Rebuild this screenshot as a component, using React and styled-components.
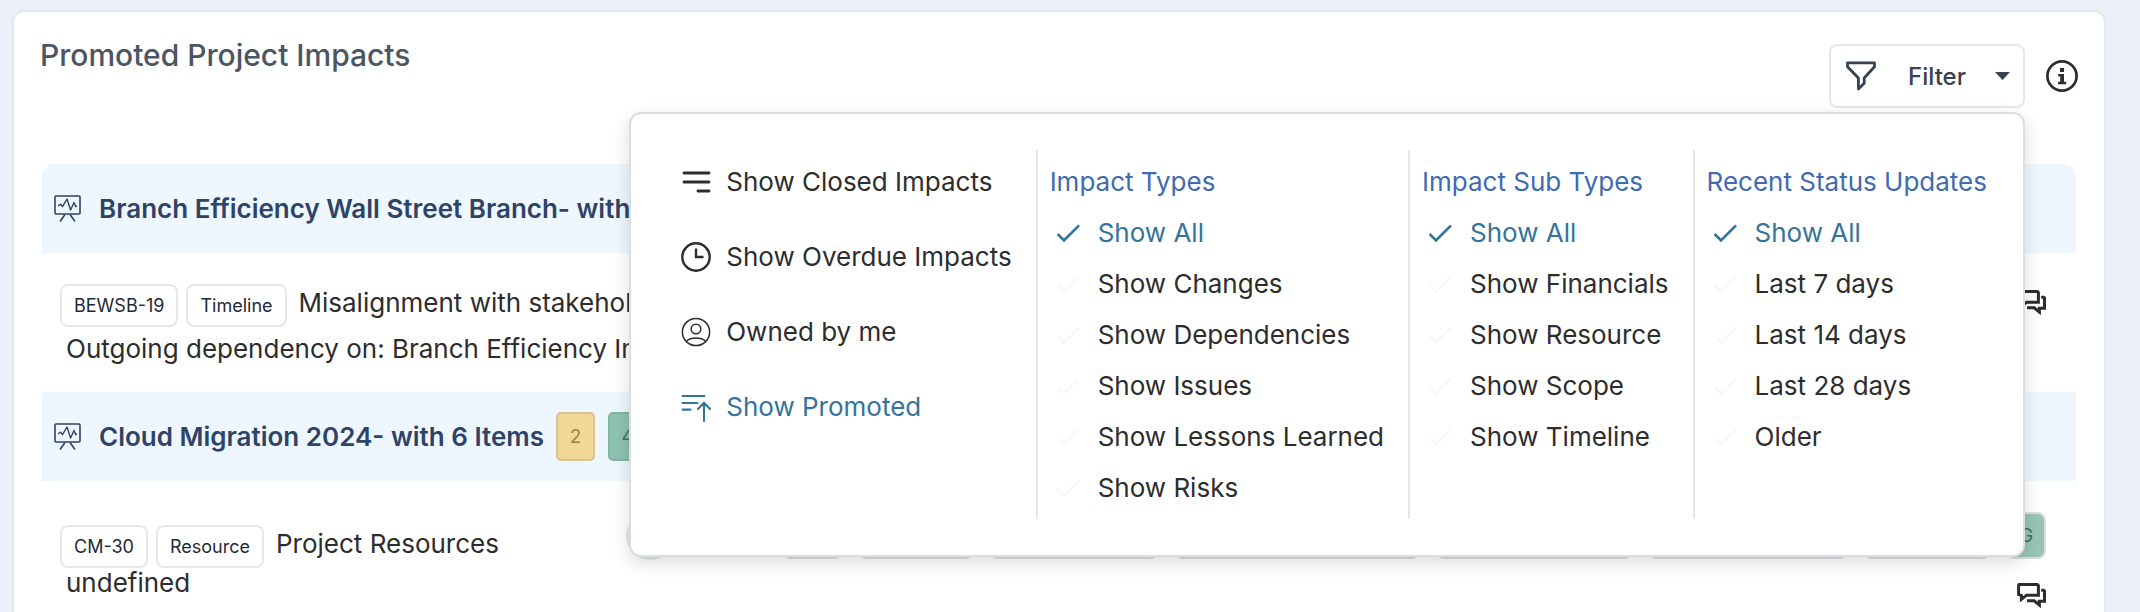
import React from 'react';
import styled, { createGlobalStyle } from 'styled-components';

const COLOR = {
  page: '#eaeff8',
  white: '#ffffff',
  line: '#e5e7eb',
  text: '#2d2d2d',
  title: '#4b5563',
  button: '#374151',
  navy: '#2f4366',
  heading: '#3f6bb0',
  active: '#34749c',
  faint: '#f7faf9',
  group: '#eef7ff',
};

const STATUS = {
  amber: { background: '#f1d798', border: '#d9c294', color: '#a08138' },
  green: { background: '#8fc1b1', border: '#84b3a4', color: '#3f7463' },
};

const GlobalStyle = createGlobalStyle`
  * {
    box-sizing: border-box;
  }

  body {
    margin: 0;
    background: ${COLOR.page};
    color: ${COLOR.text};
    font-family: Inter, 'Liberation Sans', sans-serif;
    font-size: 26px;
  }

  button {
    font: inherit;
    color: inherit;
    cursor: pointer;
  }
`;

const Page = styled.main`
  display: flex;
  flex-direction: column;
  min-height: 100vh;
  padding: 10px 34px 0 12px;
`;

const Card = styled.section`
  flex: 1;
  background: ${COLOR.white};
  border: 2px solid ${COLOR.line};
  border-bottom: 0;
  border-radius: 12px 12px 0 0;
`;

const Header = styled.header`
  display: flex;
  justify-content: space-between;
  align-items: flex-start;
  padding: 26px 26px 0;
`;

const Title = styled.h1`
  margin: 0;
  color: ${COLOR.title};
  font-size: 30px;
  font-weight: 500;
  line-height: 34px;
`;

const Actions = styled.div`
  display: flex;
  align-items: center;
  gap: 21px;
  padding-top: 6px;
`;

const Dropdown = styled.div`
  position: relative;
`;

const FilterButton = styled.button`
  display: flex;
  align-items: center;
  height: 64px;
  padding: 0 13px 0 15px;
  background: ${COLOR.white};
  border: 2px solid ${COLOR.line};
  border-radius: 8px;
  color: ${COLOR.button};
  font-size: 24px;
  font-weight: 500;
  gap: 29px;
`;

const FilterLabel = styled.span`
  padding-left: 3px;
`;

const IconButton = styled.button`
  display: flex;
  padding: 0;
  background: none;
  border: 0;
`;

const Panel = styled.div`
  position: absolute;
  top: calc(100% + 4px);
  right: 0;
  z-index: 10;
  display: flex;
  padding: 36px 36px 36px 50px;
  background: ${COLOR.white};
  border: 2px solid #dcdddf;
  border-radius: 12px;
  box-shadow: 0 6px 18px rgba(0, 0, 0, 0.14);
  white-space: nowrap;
`;

const QuickFilters = styled.div`
  display: flex;
  flex-direction: column;
  gap: 24px;
  padding: 6px 24px 6px 0;
`;

const FilterColumn = styled.div`
  padding: 6px 24px 6px 12px;
  border-left: 2px solid ${COLOR.line};

  &:last-child {
    padding-right: 0;
  }
`;

const ColumnHeading = styled.h2`
  margin: 0;
  color: ${COLOR.heading};
  font-size: 26px;
  font-weight: 400;
  line-height: 51px;
`;

const MenuItem = styled.button`
  display: flex;
  align-items: center;
  height: 51px;
  padding: 0;
  background: none;
  border: 0;
  color: ${({ $active }) => ($active ? COLOR.active : COLOR.text)};
  gap: 15px;
`;

const OptionItem = styled(MenuItem)`
  padding-left: 2px;
  gap: 14px;

  svg {
    color: ${({ $active }) => ($active ? COLOR.active : COLOR.faint)};
  }
`;

const List = styled.div`
  margin: 56px 28px 0;
  overflow: hidden;
  border-radius: 12px 12px 0 0;
`;

const GroupRow = styled.div`
  display: flex;
  align-items: center;
  height: 89px;
  padding: 0 12px;
  background: ${COLOR.group};
  color: ${COLOR.navy};
  gap: 12px;
`;

const GroupTitle = styled.h3`
  margin: 0;
  padding-left: 5px;
  font-size: 26px;
  font-weight: 600;
  white-space: nowrap;
`;

const Counts = styled.div`
  display: flex;
  gap: 13px;
`;

const Count = styled.span`
  display: flex;
  align-items: center;
  justify-content: center;
  width: 39px;
  height: 49px;
  background: ${({ $tone }) => STATUS[$tone].background};
  border: 2px solid ${({ $tone }) => STATUS[$tone].border};
  border-radius: 5px;
  color: ${({ $tone }) => STATUS[$tone].color};
  font-size: 19px;
`;

const ImpactRow = styled.article`
  display: flex;
  justify-content: space-between;
  padding: 31px 30px 28px 18px;
  white-space: nowrap;

  &:last-child {
    padding-bottom: 0;
  }
`;

const Lead = styled.div`
  padding-top: ${({ $lowered }) => ($lowered ? 13 : 0)}px;
`;

const LeadLine = styled.div`
  display: flex;
  align-items: flex-start;
  min-height: ${({ $lowered }) => ($lowered ? 43 : 50)}px;
  gap: 8px;
`;

const Tag = styled.span`
  display: flex;
  align-items: center;
  height: 43px;
  padding: 0 12px;
  border: 2px solid ${COLOR.line};
  border-radius: 8px;
  color: #1f2937;
  font-size: 18px;
`;

const ImpactTitle = styled.span`
  padding-left: 4px;
  line-height: 37px;
`;

const Detail = styled.p`
  margin: 0;
  padding-left: 6px;
  line-height: 30px;
`;

const Meta = styled.div`
  display: flex;
  flex-direction: column;
  align-items: flex-end;
  flex-shrink: 0;
  padding-top: ${({ $lowered }) => ($lowered ? 0 : 6)}px;
  gap: 24px;
`;

const Strip = styled.div`
  display: flex;
  align-items: center;
  height: 47px;
  gap: 17px;
`;

const Avatar = styled.span`
  width: 48px;
  height: 48px;
  margin-right: 92px;
  background: #dfe6f1;
  border-radius: 50%;
`;

const Chip = styled.span`
  width: ${({ $width }) => $width}px;
  height: 47px;
  background: ${COLOR.white};
  border: 2px solid #dcdde3;
  border-radius: 8px;
`;

const StatusChip = styled(Chip)`
  display: flex;
  align-items: center;
  justify-content: center;
  background: #97c5b4;
  color: #44705f;
  font-size: 18px;
`;

const BoardIcon = () => (
  <svg width="28" height="28" viewBox="0 0 28 28" fill="none" stroke="currentColor" strokeWidth="1.6" aria-hidden="true">
    <rect x="1" y="1" width="25" height="18" rx="1" />
    <path d="M4 11l2.7-1.8 1.8 2.4L13 4l3.6 11L20 7.5l1.8 4.2 1-1" strokeWidth="1.4" strokeLinejoin="round" />
    <path d="M11 19.5L6 26.5M16 19.5L21 26.5" />
  </svg>
);

const FunnelIcon = () => (
  <svg width="30" height="31" viewBox="0 0 30 31" fill="none" stroke="currentColor" strokeWidth="2.8" strokeLinejoin="round" aria-hidden="true">
    <path d="M1.5 1.9H28.5V5.8L18.2 17V22.2L12.4 28V17L1.5 5.8Z" />
  </svg>
);

const CaretIcon = () => (
  <svg width="15" height="8" viewBox="0 0 15 8" fill="currentColor" aria-hidden="true">
    <path d="M0 0H15L7.5 8Z" />
  </svg>
);

const InfoIcon = () => (
  <svg width="32" height="32" viewBox="0 0 32 32" aria-hidden="true">
    <circle cx="16" cy="16" r="14.6" fill="none" stroke="currentColor" strokeWidth="2.7" />
    <path d="M14 8H18V12H14ZM12.2 14H18V21.8H20.2V24.2H12V21.8H14.2V16.4H12.2Z" fill="currentColor" />
  </svg>
);

const LinesIcon = () => (
  <svg width="30" height="30" viewBox="0 0 30 30" stroke="currentColor" strokeWidth="2.9" strokeLinecap="round" aria-hidden="true">
    <path d="M3 6H28M3 15H28M17 24H28" />
  </svg>
);

const ClockIcon = () => (
  <svg width="30" height="30" viewBox="0 0 30 30" fill="none" stroke="currentColor" strokeWidth="2.4" aria-hidden="true">
    <circle cx="15" cy="15" r="13.7" />
    <path d="M15 6.5V15H22.5" />
  </svg>
);

const PersonIcon = () => (
  <svg width="30" height="30" viewBox="0 0 30 30" fill="none" stroke="currentColor" strokeWidth="1.5" aria-hidden="true">
    <circle cx="15" cy="15" r="13.6" />
    <circle cx="15" cy="12" r="4.8" />
    <path d="M5.2 24.2C10 20 20 20 24.8 24.2" />
  </svg>
);

const PromoteIcon = () => (
  <svg width="30" height="30" viewBox="0 0 30 30" fill="none" stroke="currentColor" strokeWidth="2.1" strokeLinecap="round" aria-hidden="true">
    <path d="M1.5 4H23.5M1.5 11H16.5M1.5 17.6H9.5M23 29V10.8M17 17L23 10.8L29 17" />
  </svg>
);

const CheckIcon = () => (
  <svg width="32" height="32" viewBox="0 0 24 24" fill="currentColor" aria-hidden="true">
    <path d="M21 7L9 19L3.5 13.5L4.91 12.09L9 16.17L19.59 5.59L21 7Z" />
  </svg>
);

const ChatIcon = () => (
  <svg width="29" height="26" viewBox="0 0 29 26" fill="none" stroke="currentColor" strokeWidth="3" aria-hidden="true">
    <path d="M2.2 1.6H20.4L21.4 2.6V12.2H9.6L4.4 16.4V12.4L1.6 11.6V2.2Z" />
    <path d="M24.2 7.2H26.6L27.5 8V18.2H22.4V22L17.2 17.8H10" />
  </svg>
);

const QUICK_FILTERS = [
  { label: 'Show Closed Impacts', Icon: LinesIcon },
  { label: 'Show Overdue Impacts', Icon: ClockIcon },
  { label: 'Owned by me', Icon: PersonIcon },
  { label: 'Show Promoted', Icon: PromoteIcon, active: true },
];

const FILTER_COLUMNS = [
  {
    heading: 'Impact Types',
    options: [
      'Show All',
      'Show Changes',
      'Show Dependencies',
      'Show Issues',
      'Show Lessons Learned',
      'Show Risks',
    ],
  },
  {
    heading: 'Impact Sub Types',
    options: ['Show All', 'Show Financials', 'Show Resource', 'Show Scope', 'Show Timeline'],
  },
  {
    heading: 'Recent Status Updates',
    options: ['Show All', 'Last 7 days', 'Last 14 days', 'Last 28 days', 'Older'],
  },
];

const CHIP_WIDTHS = [59, 114, 168, 244, 196, 198, 126];

const FilterPanel = () => (
  <Panel>
    <QuickFilters>
      {QUICK_FILTERS.map(({ label, Icon, active }) => (
        <MenuItem key={label} type="button" $active={active} aria-pressed={!!active}>
          <Icon />
          {label}
        </MenuItem>
      ))}
    </QuickFilters>
    {FILTER_COLUMNS.map(({ heading, options }) => (
      <FilterColumn key={heading}>
        <ColumnHeading>{heading}</ColumnHeading>
        {options.map((option, i) => (
          <OptionItem key={option} type="button" $active={i === 0} aria-pressed={i === 0}>
            <CheckIcon />
            {option}
          </OptionItem>
        ))}
      </FilterColumn>
    ))}
  </Panel>
);

const Impact = ({ tags, title, detail, lowered, children }) => (
  <ImpactRow>
    <Lead $lowered={lowered}>
      <LeadLine $lowered={lowered}>
        {tags.map(tag => <Tag key={tag}>{tag}</Tag>)}
        <ImpactTitle>{title}</ImpactTitle>
      </LeadLine>
      <Detail>{detail}</Detail>
    </Lead>
    <Meta $lowered={lowered}>
      {children}
      <IconButton type="button" aria-label="Comments">
        <ChatIcon />
      </IconButton>
    </Meta>
  </ImpactRow>
);

const App = () => (
  <Page>
    <GlobalStyle />
    <Card>
      <Header>
        <Title>Promoted Project Impacts</Title>
        <Actions>
          <Dropdown>
            <FilterButton type="button" aria-expanded="true">
              <FunnelIcon />
              <FilterLabel>Filter</FilterLabel>
              <CaretIcon />
            </FilterButton>
            <FilterPanel />
          </Dropdown>
          <IconButton type="button" aria-label="Information">
            <InfoIcon />
          </IconButton>
        </Actions>
      </Header>
      <List>
        <GroupRow>
          <BoardIcon />
          <GroupTitle>Branch Efficiency Wall Street Branch- with</GroupTitle>
        </GroupRow>
        <Impact
          tags={['BEWSB-19', 'Timeline']}
          title="Misalignment with stakehol"
          detail="Outgoing dependency on: Branch Efficiency In"
        />
        <GroupRow>
          <BoardIcon />
          <GroupTitle>Cloud Migration 2024- with 6 Items</GroupTitle>
          <Counts>
            <Count $tone="amber">2</Count>
            <Count $tone="green">4</Count>
          </Counts>
        </GroupRow>
        <Impact tags={['CM-30', 'Resource']} title="Project Resources" detail="undefined" lowered>
          <Strip>
            <Avatar />
            {CHIP_WIDTHS.map(width => <Chip key={width} $width={width} />)}
            <StatusChip $width={39}>G</StatusChip>
          </Strip>
        </Impact>
      </List>
    </Card>
  </Page>
);

export default App;
